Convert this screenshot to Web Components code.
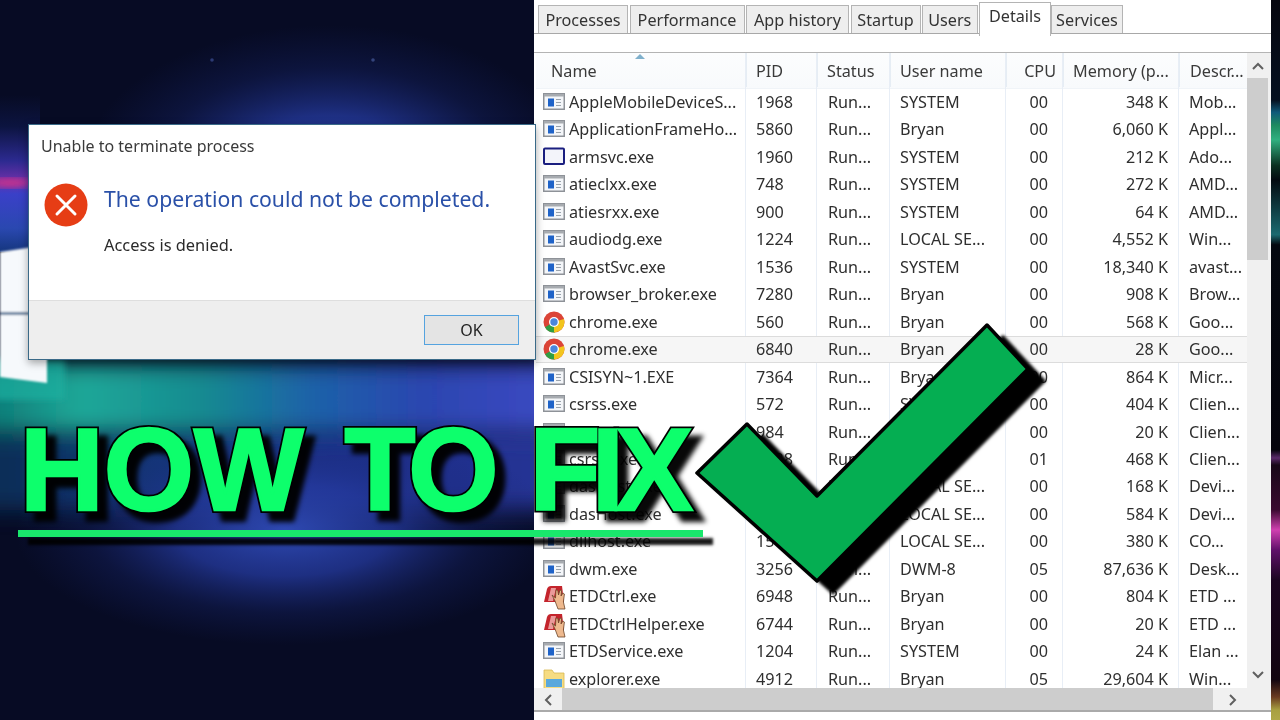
<!DOCTYPE html>
<html lang="en">
<head>
<meta charset="utf-8">
<title>How to fix</title>
<style>
html,body{margin:0;padding:0;width:1280px;height:720px;overflow:hidden;background:#070b24}
</style>
</head>
<body>
<thumb-stage>
  <desk-wallpaper></desk-wallpaper>
  <task-manager></task-manager>
  <error-dialog heading="Unable to terminate process" message="The operation could not be completed." detail="Access is denied."></error-dialog>
  <fix-banner text="HOW TO FIX"></fix-banner>
</thumb-stage>
<script>
const UI='"Noto Sans","Open Sans",sans-serif';
class ThumbStage extends HTMLElement{
  constructor(){super();this.attachShadow({mode:'open'}).innerHTML=`<style>:host{display:block;position:relative;width:1280px;height:720px;overflow:hidden}</style><slot></slot>`}
}
class DeskWallpaper extends HTMLElement{
  constructor(){super();this.attachShadow({mode:'open'}).innerHTML=`<style>:host{position:absolute;inset:0;display:block}svg{display:block}</style>
  <svg width="1280" height="720" viewBox="0 0 1280 720">
    <defs>
      <radialGradient id="b"><stop offset="0" stop-color="#2e49b2"/><stop offset=".4" stop-color="#24399c" stop-opacity=".78"/><stop offset=".72" stop-color="#1a2a78" stop-opacity=".3"/><stop offset="1" stop-color="#16246c" stop-opacity="0"/></radialGradient>
      <linearGradient id="t" x1="0" y1="0" x2="534" y2="0" gradientUnits="userSpaceOnUse">
        <stop offset="0" stop-color="#0f7f7a"/><stop offset=".15" stop-color="#1ea898"/><stop offset=".38" stop-color="#158a90"/><stop offset=".58" stop-color="#1c62a8"/><stop offset=".8" stop-color="#2b45b0"/><stop offset="1" stop-color="#3a48c0"/>
      </linearGradient>
      <linearGradient id="u" x1="0" y1="0" x2="534" y2="0" gradientUnits="userSpaceOnUse">
        <stop offset="0" stop-color="#0b3560"/><stop offset=".3" stop-color="#14408a"/><stop offset=".6" stop-color="#2238a0"/><stop offset="1" stop-color="#2a3aa8"/>
      </linearGradient>
      <linearGradient id="w" x1="0" y1="95" x2="0" y2="252" gradientUnits="userSpaceOnUse">
        <stop offset="0" stop-color="#070b24"/><stop offset=".2" stop-color="#0c1440"/><stop offset=".42" stop-color="#2c2a90"/><stop offset=".54" stop-color="#6a30a8"/><stop offset=".63" stop-color="#3a40c8"/><stop offset=".85" stop-color="#2a48b0"/><stop offset="1" stop-color="#15367e"/>
      </linearGradient>
      <linearGradient id="s" x1="0" y1="0" x2="0" y2="720" gradientUnits="userSpaceOnUse">
        <stop offset="0" stop-color="#05060f"/><stop offset=".139" stop-color="#051020"/><stop offset=".156" stop-color="#0f5a7a"/><stop offset=".174" stop-color="#1e8a60"/><stop offset=".194" stop-color="#30b080"/><stop offset=".23" stop-color="#0a3020"/><stop offset=".25" stop-color="#030a10"/>
        <stop offset=".326" stop-color="#1a6a70"/><stop offset=".34" stop-color="#040810"/><stop offset=".625" stop-color="#05040c"/><stop offset=".636" stop-color="#5a2a6a"/><stop offset=".646" stop-color="#180818"/><stop offset=".708" stop-color="#3a0a30"/><stop offset=".736" stop-color="#d040b0"/><stop offset=".764" stop-color="#60106a"/><stop offset=".806" stop-color="#1a0520"/><stop offset=".944" stop-color="#120510"/><stop offset=".968" stop-color="#6a3a20"/><stop offset=".986" stop-color="#a8a040"/><stop offset="1" stop-color="#b0a848"/>
      </linearGradient>
      <filter id="f" x="-20%" y="-40%" width="140%" height="180%"><feGaussianBlur stdDeviation="11"/></filter>
      <filter id="h"><feGaussianBlur stdDeviation="3"/></filter>
      <filter id="g" x="-5%" y="-5%" width="110%" height="110%"><feGaussianBlur stdDeviation=".8"/></filter>
    </defs>
    <rect width="1280" height="720" fill="#070b24"/>
    <ellipse cx="330" cy="175" rx="250" ry="150" fill="url(#b)"/>
    <rect x="-30" y="430" width="600" height="80" fill="url(#u)" opacity=".85" filter="url(#f)"/>
    <ellipse cx="285" cy="530" rx="270" ry="115" fill="url(#b)"/>
    <rect x="-30" y="364" width="600" height="70" fill="url(#t)" filter="url(#f)"/>
    <rect x="0" y="95" width="40" height="157" fill="url(#w)"/>
    <ellipse cx="10" cy="183" rx="20" ry="5" fill="#c03090" filter="url(#h)"/>
    <rect x="-5" y="360" width="70" height="40" fill="#1ab0a0" opacity=".7" filter="url(#h)"/>
    <g filter="url(#g)">
      <polygon points="0,252 47,245 47,312 0,312" fill="#f6f9fc"/>
      <rect x="0" y="312" width="47" height="3" fill="#5f7d9c"/>
      <polygon points="0,315 47,315 47,383 0,377" fill="#f6f9fc"/>
    </g>
    <rect x="1271" width="9" height="720" fill="url(#s)"/>
    <circle cx="212" cy="60" r="1.8" fill="#2c3a74"/><circle cx="373" cy="60" r="1.8" fill="#34447c"/>
  </svg>`}
}
class ErrorDialog extends HTMLElement{
  constructor(){super();const a=n=>this.getAttribute(n);this.attachShadow({mode:'open'}).innerHTML=`<style>
  :host{position:absolute;left:28px;top:124px;width:508px;height:236px;box-sizing:border-box;display:flex;flex-direction:column;background:#fff;border:1.5px solid #3a6a88;box-shadow:0 3px 8px rgba(0,0,0,.35);font-family:${UI};filter:blur(.35px)}
  .body{flex:1;display:flex;flex-direction:column;padding:9px 12px 0 12px}
  .cap{font-size:16px;line-height:24px;color:#3a3a3a}
  .main{display:flex;gap:16px;margin-top:25px;margin-left:3px}
  svg{flex:none}
  .msg{font-size:21.2px;line-height:32px;color:#2a50a8}
  .det{font-size:16.4px;line-height:24px;color:#2a2a2a;margin-top:18px}
  .foot{height:59px;box-sizing:border-box;background:#eeeeee;border-top:1px solid #dedede;display:flex;justify-content:flex-end;padding:14px 16px 0 0}
  button{all:unset;box-sizing:border-box;width:95px;height:30px;border:1.5px solid #55a3df;background:#e4e4e4;color:#222;font:16px ${UI};text-align:center;line-height:27px}
  </style>
  <div class="body"><div class="cap">${a('heading')}</div>
    <div class="main"><svg width="44" height="44" viewBox="0 0 44 44"><circle cx="22" cy="22" r="21.5" fill="#e63d15"/><path d="M13 13L31 31M31 13L13 31" stroke="#fff" stroke-width="3" stroke-linecap="round"/></svg>
    <div><div class="msg">${a('message')}</div><div class="det">${a('detail')}</div></div></div>
  </div>
  <div class="foot"><button>OK</button></div>`}
}
class AppIcon extends HTMLElement{
  constructor(){super();
    const k=this.getAttribute('kind')||'app';
    const art={
      app:`<rect x=".75" y="1.75" width="20.5" height="15.5" fill="#f4f6f9" stroke="#8e9298" stroke-width="1.5"/><rect x="1" y="2" width="20" height="2.5" fill="#a7abb0"/><rect x="5" y="6.5" width="6" height="8" fill="#1f63c8"/><path d="M13 7.5h5M13 10.5h5M13 13.5h5" stroke="#9aa3ad" stroke-width="1.2"/>`,
      box:`<rect x="1" y="1.5" width="20" height="15.5" rx="1" fill="#f3f4fa" stroke="#1b1f80" stroke-width="2"/>`,
      chrome:`<circle cx="11" cy="10" r="10.5" fill="#db4437"/><path d="M11 10L2 15.2A10.5 10.5 0 0 0 12 20.5Z" fill="#2f9e44"/><path d="M11 10L21 7A10.5 10.5 0 0 1 11 20.5Z" fill="#f2c51d"/><circle cx="11" cy="10" r="5" fill="#fff"/><circle cx="11" cy="10" r="3.7" fill="#4a86dc"/>`,
      etd:`<path d="M1 16L4 3Q5 0 8 0L19 0L21 16Z" fill="#c4242c"/><path d="M5 15L8 2h5L10 15z" fill="#ea9a9a"/><path d="M9 9l3.5 3 .5-8 1.8.3.7 4.7 1.5-5 1.6.6-.6 5.4 2-3 1.4 1-1 8 1.6 7h-7l-3-8z" fill="#eeb98e" stroke="#6a4428" stroke-width=".8"/>`,
      folder:`<path d="M1 1h8l2 3h10v16H1z" fill="#f6dc82" stroke="#d8b850" stroke-width=".8"/><rect x="3" y="10" width="16" height="8" fill="#5aa8dc"/>`
    }[k];
    this.attachShadow({mode:'open'}).innerHTML=`<style>:host{display:block;width:22px;height:21px}svg{display:block;overflow:visible}</style><svg width="22" height="21" viewBox="0 0 22 21">${art}</svg>`}
}
class TmTab extends HTMLElement{
  constructor(){super();this.attachShadow({mode:'open'}).innerHTML=`<style>
  :host{display:flex;align-items:center;justify-content:center;box-sizing:border-box;height:28px;margin-top:5px;border:1.5px solid #b4b4b4;border-bottom:none;margin-right:1.5px;background:#eeeeee;color:#333;font-size:16.2px}
  :host([active]){height:33.5px;margin-top:2px;margin-bottom:-1.5px;background:#fff;margin-right:0;padding-bottom:7px;position:relative;z-index:1}
  </style><slot></slot>`}
}
const COLS='grid-template-columns:210px 71px 73px 116px 57px 116px 68px';
class TmRow extends HTMLElement{
  constructor(){super();
    const d=JSON.parse(this.getAttribute('data'));
    this.attachShadow({mode:'open'}).innerHTML=`<style>
    :host{display:grid;${COLS};height:27.48px;box-sizing:border-box;align-items:center;white-space:nowrap;color:#2f2f2f;font-size:16.2px;line-height:27px}
    :host([sel]){background:#f6f6f6;box-shadow:inset 0 1px #dcdcdc,inset 0 -1px #dcdcdc}
    .n{display:flex;align-items:center;gap:4px;padding-left:7px}
    .l{padding-left:10px}.r{text-align:right;padding-right:15px}.m{padding-right:11px}
    </style>
    <div class="n"><app-icon kind="${d[0]}"></app-icon><span>${d[1]}</span></div>
    <div class="l">${d[2]}</div><div class="l" style="padding-left:11px">Run...</div><div class="l">${d[3]}</div>
    <div class="r">${d[4]}</div><div class="r m">${d[5]}</div><div class="l">${d[6]}</div>`}
}
const ROWS=[
['app','AppleMobileDeviceS...','1968','SYSTEM','00','348 K','Mob...'],
['app','ApplicationFrameHo...','5860','Bryan','00','6,060 K','Appl...'],
['box','armsvc.exe','1960','SYSTEM','00','212 K','Ado...'],
['app','atieclxx.exe','748','SYSTEM','00','272 K','AMD...'],
['app','atiesrxx.exe','900','SYSTEM','00','64 K','AMD...'],
['app','audiodg.exe','1224','LOCAL SE...','00','4,552 K','Win...'],
['app','AvastSvc.exe','1536','SYSTEM','00','18,340 K','avast...'],
['app','browser_broker.exe','7280','Bryan','00','908 K','Brow...'],
['chrome','chrome.exe','560','Bryan','00','568 K','Goo...'],
['chrome','chrome.exe','6840','Bryan','00','28 K','Goo...'],
['app','CSISYN~1.EXE','7364','Bryan','00','864 K','Micr...'],
['app','csrss.exe','572','SYSTEM','00','404 K','Clien...'],
['app','csrss.exe','984','SYSTEM','00','20 K','Clien...'],
['app','csrss.exe','1328','SYSTEM','01','468 K','Clien...'],
['app','dasHost.exe','3340','LOCAL SE...','00','168 K','Devi...'],
['app','dasHost.exe','3352','LOCAL SE...','00','584 K','Devi...'],
['app','dllhost.exe','1516','LOCAL SE...','00','380 K','CO...'],
['app','dwm.exe','3256','DWM-8','05','87,636 K','Desk...'],
['etd','ETDCtrl.exe','6948','Bryan','00','804 K','ETD ...'],
['etd','ETDCtrlHelper.exe','6744','Bryan','00','20 K','ETD ...'],
['app','ETDService.exe','1204','SYSTEM','00','24 K','Elan ...'],
['folder','explorer.exe','4912','Bryan','05','29,604 K','Win...']];
class TaskManager extends HTMLElement{
  constructor(){super();
    const rows=ROWS.map((r,i)=>`<tm-row ${i==9?'sel':''} data='${JSON.stringify(r)}'></tm-row>`).join('');
    const tabs=[['Processes',90],['Performance',115],['App history',103],['Startup',70],['Users',55.5],['Details',72],['Services',72]];
    this.attachShadow({mode:'open'}).innerHTML=`<style>
    :host{position:absolute;left:534px;top:0;width:737px;height:720px;background:#fff;display:flex;flex-direction:column;font-family:${UI};filter:blur(.35px);overflow:hidden}
    .tabs{height:34px;box-sizing:border-box;display:flex;padding-left:4px;border-bottom:1.5px solid #a8a8a8;flex:none}
    .gap{height:18px;flex:none;border-bottom:1.5px solid #b4b4b4;margin-bottom:-1.5px}
    .table{flex:none;height:657px;display:grid;grid-template-columns:713px 24px;grid-template-rows:1fr 22px;margin-top:1.5px}
    .list{overflow:hidden;position:relative;padding-left:2px;min-height:0}
    .head{display:grid;${COLS};height:35.7px;align-items:center;color:#3a3a3a;font-size:16.2px;white-space:nowrap;background:linear-gradient(#fcfdfe,#f8fafc);border-bottom:1px solid #f0f4f8;box-sizing:border-box}
    .head div{padding-left:9px;height:34px;line-height:36px;border-left:1px solid #e6edf4;box-sizing:border-box}
    .head div:first-child{border:none;padding-left:15px;position:relative}
    .head div:last-child{padding-left:10px}
    .head .r{text-align:right;padding:0 7px 0 0}
    .sort{position:absolute;left:99px;top:1px;width:0;height:0;border:5px solid transparent;border-top:none;border-bottom:5px solid #7fb0cc}
    .lines{position:absolute;inset:0 0 0 2px;display:grid;${COLS};pointer-events:none}
    .lines i{border-right:1px solid #e8eef6}
    .lines i:last-child{border:none}
    .rows{position:relative}
    .vs{background:#f0f0f0;position:relative}
    .vs b{position:absolute;left:0;right:3px;top:25px;height:182px;background:#cdcdcd}
    .vs svg{position:absolute;left:4px}
    .hs{grid-column:1/3;background:#f0f0f0;position:relative}
    .hs b{position:absolute;left:28px;width:651px;top:0;bottom:0;background:#cdcdcd}
    .hs svg{position:absolute;top:5px}
    .end{height:2px;background:#aaa;flex:none}
    </style>
    <div class="tabs">${tabs.map(t=>`<tm-tab ${t[0]=='Details'?'active':''} style="width:${t[1]}px">${t[0]}</tm-tab>`).join('')}</div>
    <div class="gap"></div>
    <div class="table">
      <div class="list">
        <div class="lines"><i></i><i></i><i></i><i></i><i></i><i></i><i></i></div>
        <div class="head"><div>Name<span class="sort"></span></div><div>PID</div><div>Status</div><div>User name</div><div class="r">CPU</div><div>Memory (p...</div><div>Descr...</div></div>
        <div class="rows">${rows}</div>
      </div>
      <div class="vs"><svg style="top:8px" width="14" height="10" viewBox="0 0 14 10"><path d="M2 8l5-5 5 5" fill="none" stroke="#606060" stroke-width="2"/></svg><b></b><svg style="bottom:8px" width="14" height="10" viewBox="0 0 14 10"><path d="M2 2l5 5 5-5" fill="none" stroke="#606060" stroke-width="2"/></svg></div>
      <div class="hs"><svg style="left:9px" width="10" height="14" viewBox="0 0 10 14"><path d="M8 2L3 7l5 5" fill="none" stroke="#606060" stroke-width="2"/></svg><b></b><svg style="left:694px" width="10" height="14" viewBox="0 0 10 14"><path d="M2 2l5 5-5 5" fill="none" stroke="#606060" stroke-width="2"/></svg></div>
    </div>
    <div class="end"></div>`}
}
class FixBanner extends HTMLElement{
  constructor(){super();
    const sp={HOW:[0,0],TO:[-5,41],FIX:[-8.5,36]};
    const words=this.getAttribute('text').split(' ').map(w=>`<span class="w" data-t="${w}" style="letter-spacing:${sp[w][0]}px;margin-left:${sp[w][1]}px">${w}</span>`).join('');
    this.attachShadow({mode:'open'}).innerHTML=`<style>
  :host{position:absolute;inset:0;display:block;pointer-events:none}
  .t{position:absolute;left:20px;top:400px;display:flex;font:bold 116px/140px "Liberation Sans",Arial,sans-serif;color:#0dff6c;-webkit-text-stroke:2.5px #0dff6c;white-space:nowrap;filter:drop-shadow(9px 9px 2.5px rgba(0,0,0,.97));z-index:0}
  .w{position:relative}
  .w::before{content:attr(data-t);position:absolute;left:0;top:0;-webkit-text-stroke:6px #000;z-index:-1}
  .l{position:absolute;left:18px;top:530px;width:685px;height:7px;background:#19e76c;box-shadow:10px 8px 3px rgba(0,0,0,.9)}
  svg{position:absolute;left:0;top:0}
  </style>
  <div class="t">${words}</div><div class="l"></div>
  <svg width="1280" height="720" viewBox="0 0 1280 720"><defs><filter id="sh" x="-10%" y="-10%" width="120%" height="120%"><feGaussianBlur stdDeviation="1.6"/></filter></defs>
  <polygon points="697,473 747,424 817,496 987,325 1028,369 817,581" transform="translate(16 12)" fill="#000" stroke="#000" stroke-width="3" filter="url(#sh)"/>
  <polygon points="697,473 747,424 817,496 987,325 1028,369 817,581" fill="#05ae52" stroke="#000" stroke-width="3.5" stroke-linejoin="round"/></svg>`}
}
customElements.define('thumb-stage',ThumbStage);
customElements.define('desk-wallpaper',DeskWallpaper);
customElements.define('error-dialog',ErrorDialog);
customElements.define('app-icon',AppIcon);
customElements.define('tm-tab',TmTab);
customElements.define('tm-row',TmRow);
customElements.define('task-manager',TaskManager);
customElements.define('fix-banner',FixBanner);
</script>
</body>
</html>
